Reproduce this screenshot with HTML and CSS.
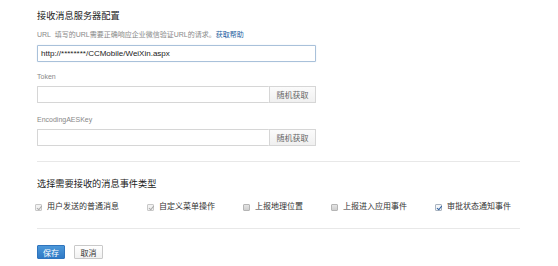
FILE: index.html
```html
<!DOCTYPE html>
<html lang="zh-CN">
<head>
    <meta charset="UTF-8">
    <title>接收消息服务器配置</title>
    <link rel="stylesheet" href="styles.css">
</head>
<body>
    <div class="panel">
        <h2 class="section-title">接收消息服务器配置</h2>

        <div class="url-tip">URL &nbsp;填写的URL需要正确响应企业微信验证URL的请求。<a class="help-link" href="#">获取帮助</a></div>
        <input class="text-input url-input" type="text" value="http://********/CCMobile/WeiXin.aspx">

        <div class="field-label token-label">Token</div>
        <div class="input-group">
            <input class="text-input" type="text">
            <button class="random-btn">随机获取</button>
        </div>

        <div class="field-label aes-label">EncodingAESKey</div>
        <div class="input-group">
            <input class="text-input" type="text">
            <button class="random-btn">随机获取</button>
        </div>

        <div class="divider first-divider"></div>

        <h2 class="section-title events-title">选择需要接收的消息事件类型</h2>

        <div class="event-list">
            <label class="event-item"><span class="check disabled-checked"></span>用户发送的普通消息</label>
            <label class="event-item"><span class="check disabled-checked"></span>自定义菜单操作</label>
            <label class="event-item"><span class="check unchecked"></span>上报地理位置</label>
            <label class="event-item"><span class="check unchecked"></span>上报进入应用事件</label>
            <label class="event-item"><span class="check checked"></span>审批状态通知事件</label>
        </div>

        <div class="divider second-divider"></div>

        <div class="actions">
            <button class="btn btn-primary">保存</button>
            <button class="btn btn-default">取消</button>
        </div>
    </div>
</body>
</html>
```

FILE: styles.css
```css
body {
    margin: 0;
    font-family: 'Liberation Sans', 'Noto Sans CJK SC', sans-serif;
    background: white;
    color: #333;
}

.panel {
    padding: 11px 0 0 37px;
    width: 483px;
}

.section-title {
    margin: 0;
    font-size: 9.2px;
    line-height: 11px;
    font-weight: normal;
    color: #222;
}

.url-tip {
    margin-top: 8px;
    font-size: 7px;
    line-height: 10px;
    color: #888;
}

.help-link {
    color: #24609f;
    text-decoration: none;
}

.text-input {
    display: block;
    box-sizing: border-box;
    height: 17px;
    border: 1px solid #d6d6d6;
    border-radius: 1px;
    padding: 0 3px;
    font-family: inherit;
    font-size: 8px;
    color: #222;
    background: white;
    outline: none;
}

.url-input {
    width: 279px;
    margin-top: 5px;
    border-color: #a9c1da;
    box-shadow: 0 0 1px rgba(102, 150, 200, 0.4);
}

.field-label {
    font-size: 7px;
    line-height: 10px;
    color: #888;
}

.token-label {
    margin-top: 10px;
}

.aes-label {
    margin-top: 12px;
}

.input-group {
    display: flex;
    width: 279px;
    margin-top: 4px;
}

.input-group .text-input {
    flex: 1;
    min-width: 0;
    border-right: none;
}

.random-btn {
    box-sizing: border-box;
    width: 47px;
    height: 17px;
    padding: 0;
    border: 1px solid #d6d6d6;
    background: linear-gradient(#fbfbfb, #f0f0f0);
    font-family: inherit;
    font-size: 8px;
    color: #666;
    cursor: pointer;
}

.divider {
    height: 1px;
    background: #e8e8e8;
    width: 483px;
}

.first-divider {
    margin-top: 15px;
}

.events-title {
    margin-top: 17px;
}

.event-list {
    display: flex;
    gap: 28px;
    margin-top: 12px;
    margin-left: -2px;
    font-size: 8px;
    line-height: 10px;
    color: #333;
}

.event-item {
    display: flex;
    align-items: center;
    flex-shrink: 0;
    white-space: nowrap;
}

.check {
    position: relative;
    box-sizing: border-box;
    width: 7px;
    height: 7px;
    margin-right: 5px;
    border: 1px solid #bbb;
    border-radius: 1px;
}

.unchecked {
    background: linear-gradient(#e4e4e4, #cfcfcf);
    border-color: #b5b5b5;
}

.disabled-checked {
    background: #f2f2f2;
    border-color: #c8c8c8;
}

.checked {
    background: #f4f6f9;
    border-color: #aab4c0;
}

.disabled-checked::after,
.checked::after {
    content: '';
    position: absolute;
    left: 1.5px;
    top: 0;
    width: 2px;
    height: 3.5px;
    border: solid #aaa;
    border-width: 0 1px 1px 0;
    transform: rotate(40deg);
}

.checked::after {
    border-color: #2d5f9e;
}

.second-divider {
    margin-top: 16px;
}

.actions {
    display: flex;
    gap: 9px;
    margin-top: 16px;
}

.btn {
    box-sizing: border-box;
    height: 14px;
    padding: 0;
    border-radius: 1px;
    font-family: inherit;
    font-size: 8px;
    cursor: pointer;
}

.btn-primary {
    width: 28px;
    border: 1px solid #2f74bd;
    background: linear-gradient(#4c98d9, #2f7ac6);
    color: white;
}

.btn-default {
    width: 29px;
    border: 1px solid #c9c9c9;
    background: linear-gradient(#ffffff, #f1f1f1);
    color: #333;
}
```
